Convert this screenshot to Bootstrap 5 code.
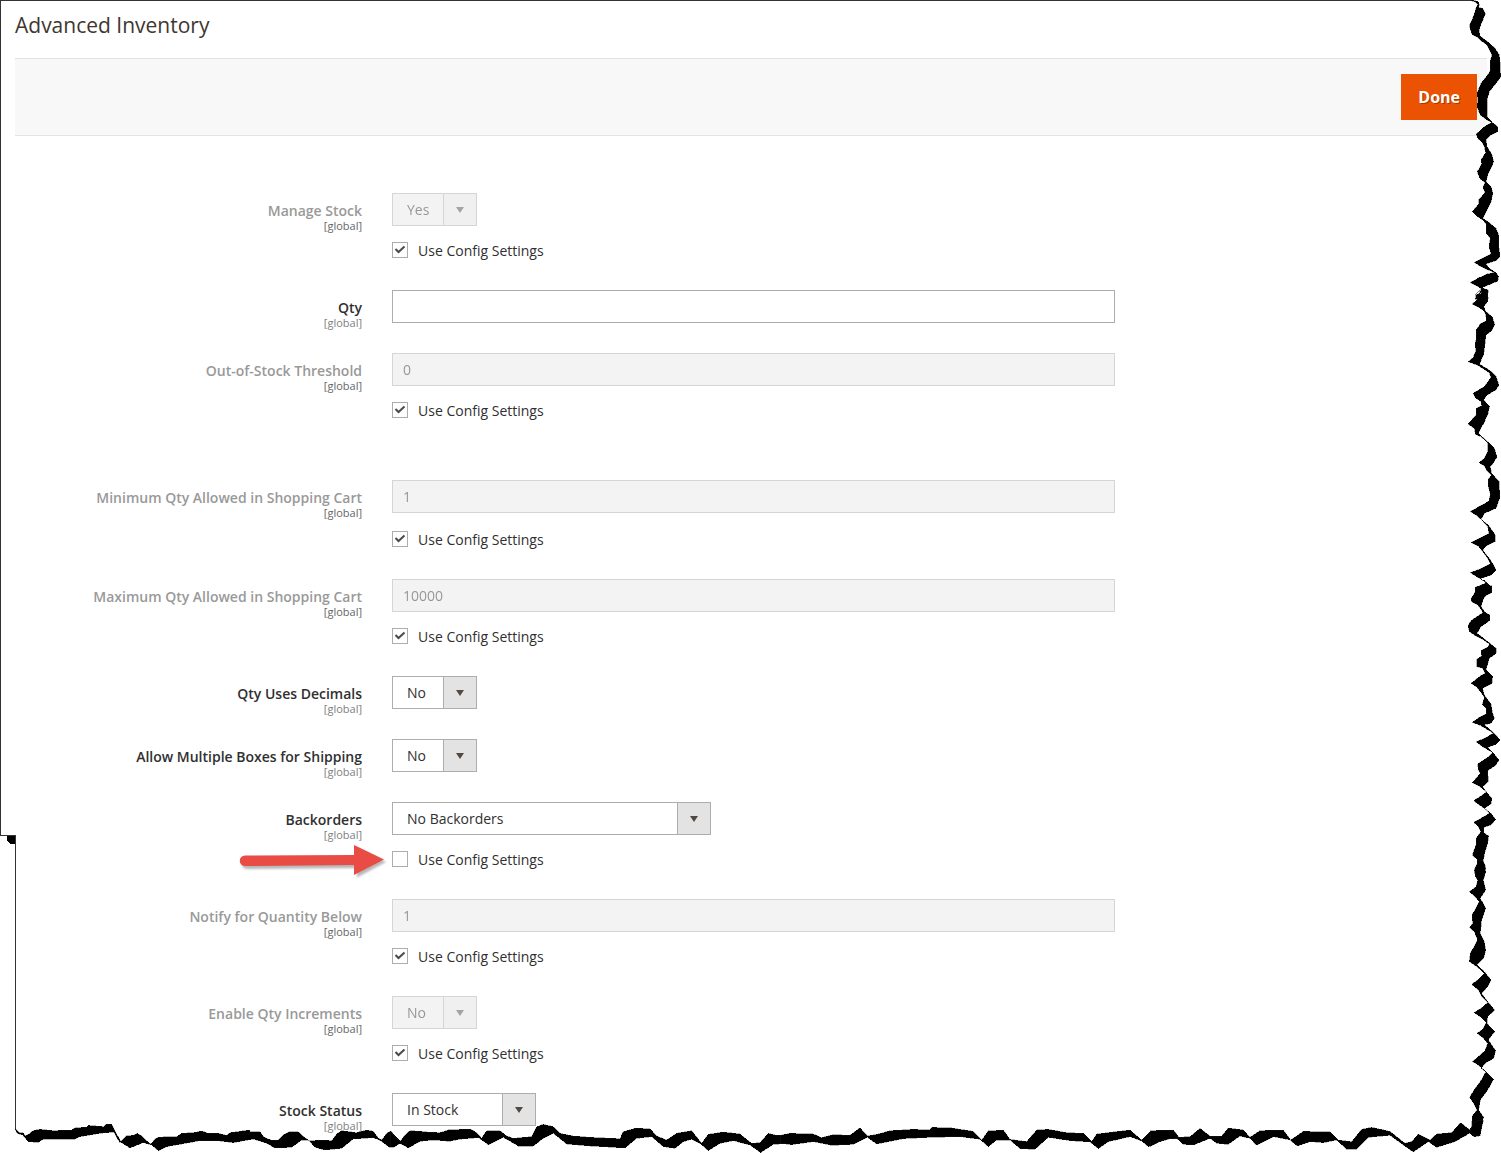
<!DOCTYPE html>
<html lang="en">
<head>
<meta charset="utf-8">
<meta name="viewport" content="width=device-width, initial-scale=1">
<title>Advanced Inventory</title>
<link href="https://cdn.jsdelivr.net/npm/bootstrap@5.3.0/dist/css/bootstrap.min.css" rel="stylesheet">
<style>
  body { font-family: "Open Sans", "Noto Sans", sans-serif; font-size: 14px; line-height: 20px; color: #303030; background: #fff; }
  .sheet { padding: 10px 14px 27px 15px; }
  .sheet-title { font-size: 21px; line-height: 30px; font-weight: 400; color: #41362f; margin: 0 0 18px; }
  .actions-bar { background: #f8f8f8; border-top: 1px solid #e3e3e3; border-bottom: 1px solid #e3e3e3; padding: 15px 10px; margin-bottom: 57px; }
  .btn-done { --bs-btn-color: #fff; --bs-btn-bg: #eb5202; --bs-btn-border-color: #eb5202; --bs-btn-hover-color: #fff; --bs-btn-hover-bg: #ba4000; --bs-btn-hover-border-color: #ba4000;
    --bs-btn-border-radius: 0; --bs-btn-font-size: 16px; --bs-btn-font-weight: 700; --bs-btn-line-height: 22px; --bs-btn-padding-x: 16px; --bs-btn-padding-y: 11px; text-shadow: 1px 1px 0 rgba(0,0,0,.3); }
  .inv-form { margin-right: 26px; }
  .inv-row { gap: 30px; margin-bottom: 30px; }
  .inv-row.section-end { margin-bottom: 60px; }
  .inv-label { flex: 0 0 24%; padding-top: 8px; margin-bottom: -8px; }
  .inv-label label { display: block; font-weight: 600; line-height: 19px; }
  .scope { display: block; font-size: 11px; line-height: 11px; color: #808080; }
  .is-off .inv-label label { color: #999; }
  .is-off .scope { color: #666; }
  .inv-control { flex: 0 0 50%; }
  .form-control, .form-select { height: 33px; border: 1px solid #adadad; border-radius: 0; font-size: 14px; line-height: 20px; color: #303030; }
  .form-control { padding: 5px 10px; }
  .form-select { padding: 5px 40px 5px 14px;
    background-image: url("data:image/svg+xml,%3Csvg xmlns='http://www.w3.org/2000/svg' viewBox='0 0 33 31'%3E%3Cpath fill='%23e3e3e3' d='M0 0h33v31H0z'/%3E%3Cpath fill='%23adadad' d='M0 0h1v31H0z'/%3E%3Cpath fill='%23514943' d='M13 13h8l-4 6z'/%3E%3C/svg%3E");
    background-size: 33px 31px; background-position: right center; }
  .form-control:disabled, .form-select:disabled { background-color: #e9e9e9; opacity: .5; }
  .w-short { width: 85px; }
  .w-status { width: 144px; }
  .w-wide { width: 319px; }
  .config-line { gap: 10px; margin-top: 14px; }
  .config-line.roomy { margin-top: 16px; }
  .config-line .form-check-input { width: 16px; height: 16px; margin: 0; border: 1px solid #adadad; border-radius: 0; background-color: #fff; }
  .config-line .form-check-input:checked { background-size: 14px 14px;
    background-image: url("data:image/svg+xml,%3Csvg xmlns='http://www.w3.org/2000/svg' viewBox='0 0 14 14'%3E%3Cpath fill='none' stroke='%23514943' stroke-width='2' d='M2.500 6l3 3 6-5.500'/%3E%3C/svg%3E"); }
  .config-line label { line-height: 20px; padding-top: 1px; margin-bottom: -1px; }
  .pointer { position: absolute; right: 100%; top: -8px; margin-right: 5px; }
  .torn { position: absolute; pointer-events: none; shape-rendering: crispEdges; }
  .torn-left { left: 0; top: 0; height: 100%; width: 16px; }
  .torn-top { left: 0; top: 0; right: 30px; border-top: 1px solid #333; }
  .torn-right { right: 0; top: 0; width: 60px; height: 100%; }
  .torn-bottom { left: 0; bottom: 0; width: 100%; height: 63px; }
</style>
</head>
<body>
<main class="sheet position-relative overflow-hidden">
  <h1 class="sheet-title">Advanced Inventory</h1>
  <div class="actions-bar d-flex justify-content-end">
    <button type="button" class="btn btn-done">Done</button>
  </div>

  <form class="inv-form">
    <div class="inv-row d-flex is-off">
      <div class="inv-label text-end"><label for="manage">Manage Stock</label><span class="scope">[global]</span></div>
      <div class="inv-control">
        <select id="manage" class="form-select w-short" disabled><option>Yes</option></select>
        <div class="config-line d-flex align-items-center"><input class="form-check-input" type="checkbox" id="c1" checked><label for="c1">Use Config Settings</label></div>
      </div>
    </div>
    <div class="inv-row d-flex">
      <div class="inv-label text-end"><label for="qty">Qty</label><span class="scope">[global]</span></div>
      <div class="inv-control"><input id="qty" class="form-control" type="text"></div>
    </div>
    <div class="inv-row section-end d-flex is-off">
      <div class="inv-label text-end"><label for="threshold">Out-of-Stock Threshold</label><span class="scope">[global]</span></div>
      <div class="inv-control">
        <input id="threshold" class="form-control" type="text" value="0" disabled>
        <div class="config-line d-flex align-items-center"><input class="form-check-input" type="checkbox" id="c2" checked><label for="c2">Use Config Settings</label></div>
      </div>
    </div>
    <div class="inv-row d-flex is-off">
      <div class="inv-label text-end"><label for="minqty">Minimum Qty Allowed in Shopping Cart</label><span class="scope">[global]</span></div>
      <div class="inv-control">
        <input id="minqty" class="form-control" type="text" value="1" disabled>
        <div class="config-line roomy d-flex align-items-center"><input class="form-check-input" type="checkbox" id="c3" checked><label for="c3">Use Config Settings</label></div>
      </div>
    </div>
    <div class="inv-row d-flex is-off">
      <div class="inv-label text-end"><label for="maxqty">Maximum Qty Allowed in Shopping Cart</label><span class="scope">[global]</span></div>
      <div class="inv-control">
        <input id="maxqty" class="form-control" type="text" value="10000" disabled>
        <div class="config-line d-flex align-items-center"><input class="form-check-input" type="checkbox" id="c4" checked><label for="c4">Use Config Settings</label></div>
      </div>
    </div>
    <div class="inv-row d-flex">
      <div class="inv-label text-end"><label for="decimals">Qty Uses Decimals</label><span class="scope">[global]</span></div>
      <div class="inv-control"><select id="decimals" class="form-select w-short"><option>No</option><option>Yes</option></select></div>
    </div>
    <div class="inv-row d-flex">
      <div class="inv-label text-end"><label for="boxes">Allow Multiple Boxes for Shipping</label><span class="scope">[global]</span></div>
      <div class="inv-control"><select id="boxes" class="form-select w-short"><option>No</option><option>Yes</option></select></div>
    </div>
    <div class="inv-row d-flex">
      <div class="inv-label text-end"><label for="backorders">Backorders</label><span class="scope">[global]</span></div>
      <div class="inv-control">
        <select id="backorders" class="form-select w-wide"><option>No Backorders</option></select>
        <div class="config-line d-flex align-items-center position-relative">
          <svg class="pointer" width="148" height="40" viewBox="0 0 148 40" aria-hidden="true">
            <g transform="translate(2 3)" fill="#333" opacity=".35" style="filter:blur(1px)"><path d="M6 14.500L116 13V3.500L145 18l-29 15.500V24L6 25a5 5 0 0 1 0-10.500z"/></g>
            <path fill="#e84c44" d="M6 14.500L115 14V4l30 14.500L115 34V24L6 25a5 5 0 0 1 0-10.500z"/>
          </svg>
          <input class="form-check-input" type="checkbox" id="c5"><label for="c5">Use Config Settings</label>
        </div>
      </div>
    </div>
    <div class="inv-row d-flex is-off">
      <div class="inv-label text-end"><label for="notify">Notify for Quantity Below</label><span class="scope">[global]</span></div>
      <div class="inv-control">
        <input id="notify" class="form-control" type="text" value="1" disabled>
        <div class="config-line d-flex align-items-center"><input class="form-check-input" type="checkbox" id="c6" checked><label for="c6">Use Config Settings</label></div>
      </div>
    </div>
    <div class="inv-row d-flex is-off">
      <div class="inv-label text-end"><label for="increments">Enable Qty Increments</label><span class="scope">[global]</span></div>
      <div class="inv-control">
        <select id="increments" class="form-select w-short" disabled><option>No</option></select>
        <div class="config-line d-flex align-items-center"><input class="form-check-input" type="checkbox" id="c7" checked><label for="c7">Use Config Settings</label></div>
      </div>
    </div>
    <div class="inv-row mb-0 d-flex">
      <div class="inv-label text-end"><label for="status">Stock Status</label><span class="scope">[global]</span></div>
      <div class="inv-control"><select id="status" class="form-select w-status"><option>In Stock</option><option>Out of Stock</option></select></div>
    </div>
  </form>

  <!-- torn paper edge -->
  <div class="torn torn-top"></div>
  <svg class="torn torn-left" viewBox="0 0 16 1153" preserveAspectRatio="none" aria-hidden="true">
    <path fill="#333" d="M0 0h1v835h15v295h-1V836H0z"/><path d="M7 836h8v8h-4l-2-1-2-3z"/>
  </svg>
  <svg class="torn torn-right" viewBox="0 0 180 3459" preserveAspectRatio="none" stroke="#222" stroke-width="1" aria-hidden="true">
    <polygon transform="translate(-180 0)" points="270,2 283,6 290,14 286,22 282,35 277,50 266,75 268,90 275,105 290,112 300,122 318,135 325,150 333,165 327,185 328,210 322,222 300,250 288,280 291,300 288,320 298,345 315,358 332,368 310,380 286,402 290,415 302,425 310,440 314,458 300,480 302,492 289,515 296,535 312,548 306,562 312,578 294,598 293,612 274,635 290,650 305,660 316,672 316,700 328,715 324,740 330,762 305,775 280,787 300,800 340,818 318,822 290,835 268,848 300,865 305,875 285,885 283,897 298,903 296,872 322,897 318,875 305,862 335,850 350,843 353,830 345,818 325,805 315,792 345,782 357,770 353,735 353,705 345,685 325,668 306,655 318,630 330,605 336,580 330,560 315,545 320,525 330,505 338,485 332,462 318,440 315,418 330,405 350,395 350,380 335,368 318,350 318,300 325,275 345,250 360,230 357,210 357,185 355,165 342,145 320,125 297,108 294,90 303,65 314,42 305,25 293,22 295,14 292,5 272,0"/>
    <polygon transform="translate(0 870)" points="103,15 118,0 122,8 108,20 108,30 93,42 110,50 128,62 134,72 136,92 118,102 105,120 106,145 103,160 104,185 96,203 82,215 110,226 145,248 150,262 130,290 96,310 105,325 120,335 122,348 105,355 105,375 81,402 100,415 104,434 120,440 140,458 140,485 130,505 114,518 130,528 140,545 152,555 142,568 142,590 148,612 144,632 130,642 110,652 88,665 105,675 122,690 140,710 144,730 120,742 90,757 112,768 125,785 140,805 148,822 120,836 88,848 110,862 138,878 128,882 103,892 103,900 153,900 150,892 140,880 118,866 150,855 165,840 150,812 125,780 135,768 162,755 163,735 142,705 120,688 130,670 165,655 176,625 175,575 152,550 148,530 160,515 168,500 160,475 140,455 112,430 128,400 140,375 146,350 128,330 138,315 165,300 174,285 165,258 145,240 115,222 128,195 131,170 135,135 152,122 161,105 155,82 135,65 128,50 140,35 140,18 142,0 124,-6"/>
    <polygon transform="translate(0 1740)" points="125,0 135,8 118,18 104,28 100,42 90,55 92,66 110,74 120,88 126,98 108,110 90,122 81,138 85,155 100,165 125,178 145,192 140,202 120,212 122,228 107,238 108,260 125,265 132,280 115,290 90,310 108,322 122,340 130,352 124,374 136,386 136,402 115,412 94,427 118,436 158,460 135,472 106,486 125,500 155,518 140,532 110,552 112,568 118,580 94,608 115,618 136,636 120,648 98,662 115,675 130,685 145,700 125,712 98,727 110,737 120,755 105,775 105,795 94,825 108,838 108,852 100,870 103,890 112,900 127,900 130,890 134,865 126,845 132,815 140,790 143,768 128,758 128,742 150,735 164,718 148,698 130,685 150,672 153,655 138,638 125,620 142,605 140,572 165,555 174,540 158,520 140,502 165,493 177,480 160,460 130,434 150,430 160,415 155,400 150,372 130,345 125,325 153,310 155,290 135,270 145,235 166,220 165,205 145,188 108,160 120,140 146,122 146,105 130,95 120,78 130,50 152,38 152,18 135,12 130,0"/>
    <polygon transform="translate(0 2580)" points="108,0 108,15 100,30 104,48 110,60 105,80 85,95 100,108 115,125 103,148 93,165 95,190 86,203 100,215 110,240 98,262 88,280 85,305 108,320 130,340 110,360 92,373 112,390 122,410 140,428 120,445 99,458 118,470 136,488 125,508 108,520 125,532 140,550 132,572 112,590 94,605 112,615 135,635 118,665 98,692 86,712 98,730 108,750 94,768 92,800 82,815 92,825 100,830 115,828 118,805 128,772 113,750 118,720 140,690 158,658 140,640 120,625 135,608 158,595 164,572 142,540 161,515 138,490 140,470 161,450 140,425 122,400 140,380 150,360 130,335 108,315 128,295 134,270 130,245 118,220 122,180 134,145 118,115 134,90 126,58 134,38 132,15 124,0"/>
  </svg>
  <svg class="torn torn-bottom" viewBox="0 0 4503 189" preserveAspectRatio="none" stroke="#222" stroke-width="1" aria-hidden="true">
    <polygon points="46,115 58,128 70,128 75,138 90,130 98,122 120,118 160,122 215,120 225,113 260,112 265,106 310,110 318,103 335,103 345,122 362,155 378,138 400,136 412,130 425,138 440,152 452,162 470,143 500,140 530,140 545,130 580,128 605,123 625,130 655,130 680,136 690,128 720,124 748,120 752,126 780,125 790,140 812,150 835,150 850,135 868,125 895,125 910,140 930,153 960,150 995,152 1010,132 1025,122 1070,128 1100,120 1120,124 1135,145 1145,150 1160,130 1172,123 1200,153 1168,172 1142,152 1120,143 1060,147 1025,175 975,180 945,172 925,150 905,150 875,172 825,174 800,160 760,147 700,158 650,152 600,152 545,162 500,170 475,182 455,165 430,158 390,174 368,160 358,156 342,126 300,130 240,140 225,147 130,147 115,157 85,155 68,135 52,130 46,118"/>
    <polygon transform="translate(1170 0)" points="0,126 15,140 30,155 45,135 60,122 90,124 110,126 150,128 175,120 240,117 260,128 275,145 290,122 330,122 350,138 370,145 425,140 440,110 460,103 490,110 510,130 550,138 600,142 690,146 700,125 735,115 780,116 800,138 830,150 860,130 905,122 935,160 955,133 1000,126 1050,132 1085,160 1110,158 1135,130 1160,136 1200,138 1200,160 1150,163 1112,188 1080,165 1030,152 990,160 955,182 930,160 905,148 880,155 855,175 820,170 785,140 740,145 705,174 600,168 530,162 490,130 460,145 430,168 385,168 340,142 295,164 265,143 205,148 180,154 130,150 90,154 55,174 30,160 12,172 0,172"/>
    <polygon transform="translate(2340 0)" points="0,136 30,130 100,132 125,143 160,134 210,136 240,113 262,138 295,132 330,122 400,118 450,120 455,112 515,114 580,124 605,150 625,123 670,120 690,148 740,155 770,120 805,118 860,128 910,130 935,155 950,132 1050,120 1085,150 1110,126 1145,122 1180,120 1200,146 1170,146 1140,155 1105,170 1085,153 1050,140 985,155 955,176 930,156 870,152 805,142 765,178 720,176 690,150 650,150 625,170 600,148 540,140 450,142 370,146 290,162 262,142 220,163 155,166 100,155 35,164 0,160"/>
    <polygon transform="translate(3450 0)" points="0,122 70,120 85,142 120,140 150,115 180,138 215,138 235,114 280,120 300,142 330,122 400,120 422,150 460,124 540,126 565,150 605,155 635,118 665,112 720,124 765,160 785,155 805,132 840,150 860,132 905,128 932,98 962,122 970,95 1000,90 990,138 962,128 915,155 860,172 835,155 790,186 760,165 720,136 655,142 620,178 590,178 560,150 520,158 480,155 442,168 420,150 370,140 320,166 300,145 270,138 235,163 200,160 180,145 130,165 100,163 80,145 40,148 0,170"/>
  </svg>
</main>
<script src="https://cdn.jsdelivr.net/npm/bootstrap@5.3.0/dist/js/bootstrap.bundle.min.js"></script>
</body>
</html>
